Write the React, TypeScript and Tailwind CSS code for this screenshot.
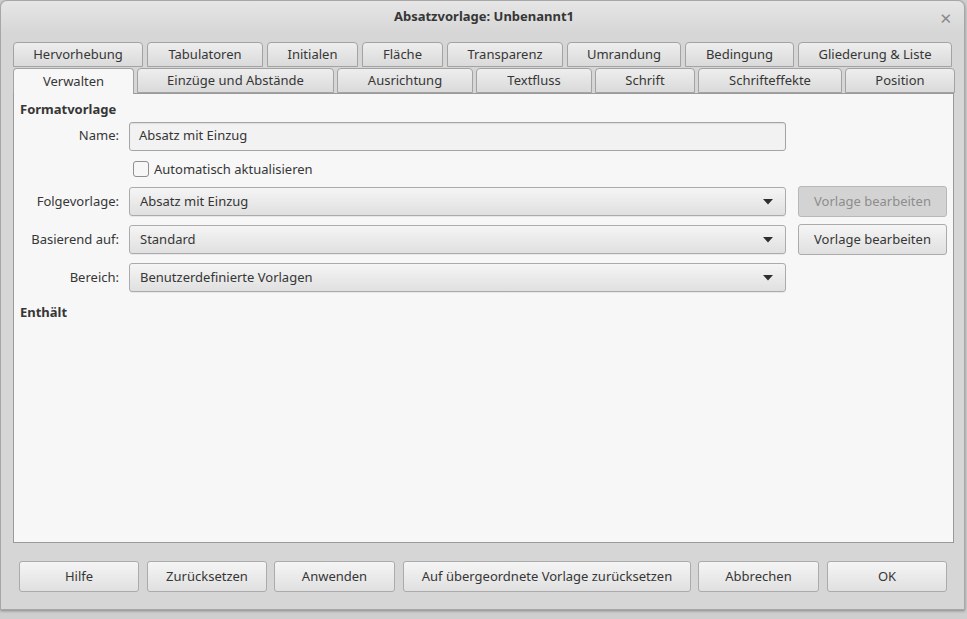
const ROW1 = [
  { label: 'Hervorhebung', w: 'w-[130px]' },
  { label: 'Tabulatoren', w: 'w-[116px]' },
  { label: 'Initialen', w: 'w-[91px]' },
  { label: 'Fläche', w: 'w-[81px]' },
  { label: 'Transparenz', w: 'w-[116px]' },
  { label: 'Umrandung', w: 'w-[114px]' },
  { label: 'Bedingung', w: 'w-[109px]' },
  { label: 'Gliederung & Liste', w: 'w-[154px]' },
]

const ROW2 = [
  { label: 'Einzüge und Abstände', w: 'w-[197px]' },
  { label: 'Ausrichtung', w: 'w-[136px]' },
  { label: 'Textfluss', w: 'w-[116px]' },
  { label: 'Schrift', w: 'w-[100px]' },
  { label: 'Schrifteffekte', w: 'w-[144px]' },
  { label: 'Position', w: 'w-[110px]' },
]

// widths and left spacing taken from the reference button row
const FOOTER = [
  { label: 'Hilfe', w: 'w-[120px]' },
  { label: 'Zurücksetzen', w: 'w-[120px] ml-[8px]' },
  { label: 'Anwenden', w: 'w-[121px] ml-[7px]' },
  { label: 'Auf übergeordnete Vorlage zurücksetzen', w: 'w-[288px] ml-[8px]' },
  { label: 'Abbrechen', w: 'w-[121px] ml-[7px]' },
  { label: 'OK', w: 'w-[120px] ml-[8px]' },
]

function Tab({ label, w }: { label: string; w: string }) {
  return (
    <div
      className={`${w} h-[25px] flex items-center justify-center rounded-t-[4px] border border-[#a3a3a3] bg-gradient-to-b from-[#eeeeee] to-[#dadada]`}
    >
      {label}
    </div>
  )
}

function Combo({ value }: { value: string }) {
  return (
    <div className="w-[657px] h-[29px] flex items-center justify-between pl-[10px] pr-[12px] rounded-[3px] border border-[#ababab] bg-gradient-to-b from-[#f5f5f5] to-[#e0e0e0] shadow-[0_1px_0_rgba(0,0,0,0.06)]">
      <span>{value}</span>
      <svg width="10" height="6" viewBox="0 0 10 6">
        <path d="M0 0h10L5 5.5z" fill="#2e2e2e" />
      </svg>
    </div>
  )
}

function EditButton({ disabled }: { disabled?: boolean }) {
  return (
    <div
      className={
        disabled
          ? 'w-[149px] h-[31px] flex items-center justify-center rounded-[3px] border border-[#b8b8b8] bg-[#d3d3d3] text-[#8d8d8d]'
          : 'w-[149px] h-[31px] flex items-center justify-center rounded-[3px] border border-[#ababab] bg-gradient-to-b from-[#f5f5f5] to-[#e0e0e0]'
      }
    >
      Vorlage bearbeiten
    </div>
  )
}

export default function App() {
  return (
    <div
      className="w-[967px] h-[619px] overflow-hidden bg-[#cfcfcf] text-[13px] text-[#363636]"
      style={{ fontFamily: '"Noto Sans", "DejaVu Sans", sans-serif' }}
    >
      <div className="w-[965px] h-[610px] flex flex-col rounded-t-[7px] border border-[#a7a7a7] bg-[#d6d6d6] shadow-[0_1px_3px_rgba(0,0,0,0.35)]">
        {/* Title bar */}
        <div className="relative h-[32px] shrink-0 flex items-center justify-center rounded-t-[7px] bg-gradient-to-b from-[#e6e6e6] to-[#d6d6d6]">
          <span className="font-bold ml-[3px]">Absatzvorlage: Unbenannt1</span>
          <span className="absolute right-[12px] top-[6px] text-[15px] font-bold text-[#8a8a8a]">✕</span>
        </div>

        {/* Tabs */}
        <div className="pl-[12px] pt-[9px] flex flex-col">
          <div className="flex gap-[4px]">
            {ROW1.map((t) => (
              <Tab key={t.label} {...t} />
            ))}
          </div>
          <div className="flex gap-[3px] mt-[1px]">
            <div className="relative z-10 w-[121px] h-[26px] flex items-center justify-center rounded-t-[4px] border border-b-0 border-[#a3a3a3] bg-[#f7f7f7]">
              Verwalten
            </div>
            {ROW2.map((t) => (
              <Tab key={t.label} {...t} />
            ))}
          </div>
        </div>

        {/* Panel */}
        <div className="ml-[12px] w-[941px] h-[450px] -mt-[1px] border border-[#9a9a9a] bg-[#f7f7f7] pl-[6px] pt-[6px]">
          <div className="font-bold">Formatvorlage</div>
          <div className="mt-[2px] flex items-center">
            <span className="w-[99px] text-right">Name:</span>
            <div className="ml-[10px] w-[657px] h-[29px] flex items-center px-[9px] rounded-[3px] border border-[#a5a5a5] bg-[#f2f2f2] shadow-[inset_0_1px_1px_rgba(0,0,0,0.08)]">
              Absatz mit Einzug
            </div>
          </div>
          <div className="mt-[9px] ml-[113px] flex items-center gap-[5px]">
            <div className="w-[16px] h-[16px] rounded-[3px] border border-[#8f8f8f] bg-[#f7f7f7]" />
            <span>Automatisch aktualisieren</span>
          </div>
          <div className="mt-[7px] flex items-center">
            <span className="w-[99px] text-right">Folgevorlage:</span>
            <div className="ml-[10px]">
              <Combo value="Absatz mit Einzug" />
            </div>
            <div className="ml-[12px]">
              <EditButton disabled />
            </div>
          </div>
          <div className="mt-[7px] flex items-center">
            <span className="w-[99px] text-right">Basierend auf:</span>
            <div className="ml-[10px]">
              <Combo value="Standard" />
            </div>
            <div className="ml-[12px]">
              <EditButton />
            </div>
          </div>
          <div className="mt-[8px] flex items-center">
            <span className="w-[99px] text-right">Bereich:</span>
            <div className="ml-[10px]">
              <Combo value="Benutzerdefinierte Vorlagen" />
            </div>
          </div>
          <div className="mt-[11px] font-bold">Enthält</div>
        </div>

        {/* Footer buttons */}
        <div className="mt-[18px] pl-[18px] flex">
          {FOOTER.map((b) => (
            <div
              key={b.label}
              className={`${b.w} h-[31px] flex items-center justify-center rounded-[3px] border border-[#ababab] bg-gradient-to-b from-[#f5f5f5] to-[#e0e0e0]`}
            >
              {b.label}
            </div>
          ))}
        </div>
      </div>
    </div>
  )
}
